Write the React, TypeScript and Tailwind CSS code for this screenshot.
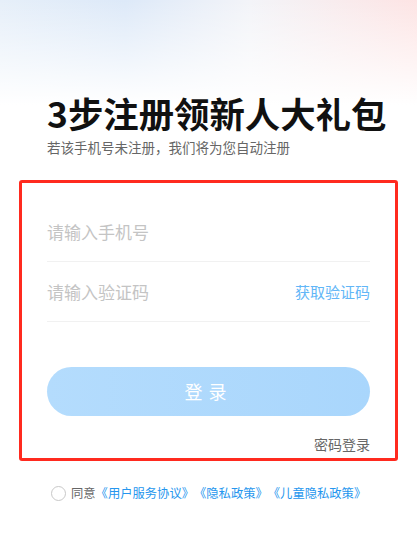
import { useState } from "react"

const font = { fontFamily: '"Noto Sans CJK SC", "Noto Sans", sans-serif' }

export default function App() {
  const [agree, setAgree] = useState(false)

  return (
    <div
      style={font}
      className="min-h-[549px] w-full bg-white bg-[linear-gradient(180deg,rgba(255,255,255,0)_0px,#fff_105px),linear-gradient(90deg,#e6eff9_0%,#dde9f8_30%,#f3f4f8_60%,#fde4e4_100%)] bg-no-repeat pt-[95px]"
    >
      <div className="px-[47px]">
        <h1 className="whitespace-nowrap text-[35.4px] leading-none font-bold text-[#111]">
          3步注册领新人大礼包
        </h1>
        <p className="mt-[7px] whitespace-nowrap text-[13.5px] leading-[20px] text-[#666]">
          若该手机号未注册，我们将为您自动注册
        </p>
      </div>

      <div className="mx-[19px] mt-[23px] rounded-[3px] border-[3px] border-[#ff2a1f] pl-[25px] pr-[25px] pt-[19px] pb-[4px]">
        <div className="flex h-[60px] items-center border-b border-[#f1f1f1]">
          <input
            className="w-full bg-transparent text-[17px] text-[#333] outline-none placeholder:text-[#c4c4c4]"
            placeholder="请输入手机号"
            style={font}
          />
        </div>
        <div className="flex h-[60px] items-center border-b border-[#f1f1f1]">
          <input
            className="min-w-0 flex-1 bg-transparent text-[17px] text-[#333] outline-none placeholder:text-[#c4c4c4]"
            placeholder="请输入验证码"
            style={font}
          />
          <span className="text-[15px] text-[#62b6f7]">获取验证码</span>
        </div>

        <button
          style={font}
          className="mt-[45px] flex h-[49px] w-full items-center justify-center rounded-full bg-[linear-gradient(90deg,#b4dcfd,#a9d6fc)] text-[18px] tracking-[6px] text-white"
        >
          登录
        </button>

        <div className="mt-[18px] text-right text-[14px] leading-[20px] text-[#666]">密码登录</div>
      </div>

      <div className="mt-[22px] flex items-center pl-[51px] text-[12.3px] leading-[20px]">
        <button
          onClick={() => setAgree(!agree)}
          className="mr-[5px] h-[15px] w-[15px] rounded-full border border-[#c8c8c8] bg-white"
        />
        <span className="text-[#666]">同意</span>
        <span className="text-[#2596ee]">《用户服务协议》</span>
        <span className="text-[#2596ee]">《隐私政策》</span>
        <span className="text-[#2596ee]">《儿童隐私政策》</span>
      </div>
    </div>
  )
}
